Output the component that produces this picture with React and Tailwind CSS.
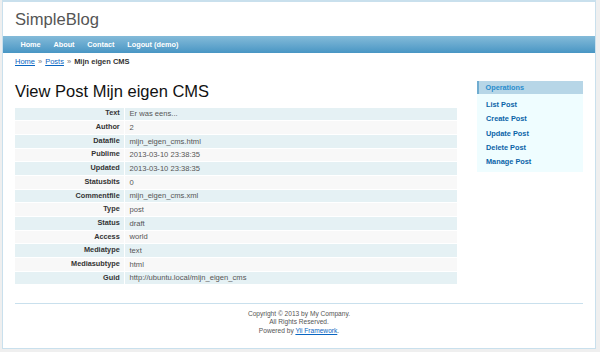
import React from 'react';

const details = [
    ['Text', 'Er was eens...'],
    ['Author', '2'],
    ['Datafile', 'mijn_eigen_cms.html'],
    ['Publime', '2013-03-10 23:38:35'],
    ['Updated', '2013-03-10 23:38:35'],
    ['Statusbits', '0'],
    ['Commentfile', 'mijn_eigen_cms.xml'],
    ['Type', 'post'],
    ['Status', 'draft'],
    ['Access', 'world'],
    ['Mediatype', 'text'],
    ['Mediasubtype', 'html'],
    ['Guid', 'http://ubuntu.local/mijn_eigen_cms'],
];

const menu = ['Home', 'About', 'Contact', 'Logout (demo)'];
const operations = ['List Post', 'Create Post', 'Update Post', 'Delete Post', 'Manage Post'];

const App = () => {
    return (
        <div
            className="w-[600px] h-[352px] bg-[#efefef] pl-[2px] pr-[4px] pb-[3px] overflow-hidden text-[#555]"
            style={{ fontFamily: '"Liberation Sans", Arial, sans-serif' }}
        >
            <div className="h-[349px] bg-white border border-[#c9e0ed] border-t-2 flex flex-col">
                {/* header */}
                <div className="h-[34px] pt-[8px] pl-[12px]">
                    <div className="text-[16.6px] leading-[20px] text-[#555]">SimpleBlog</div>
                </div>

                {/* main menu */}
                <div className="h-[17px] bg-gradient-to-b from-[#84bbd9] to-[#4896c4] flex items-center pl-[11px]">
                    {menu.map(item => (
                        <span key={item} className="px-[6.4px] text-[7.3px] font-bold text-white leading-none">{item}</span>
                    ))}
                </div>

                {/* breadcrumbs */}
                <div className="h-[17.5px] flex items-center pl-[12px] text-[7.5px] leading-none gap-[3px]">
                    <span className="text-[#0a66c2] underline">Home</span>
                    <span className="text-[#777]">»</span>
                    <span className="text-[#0a66c2] underline">Posts</span>
                    <span className="text-[#777]">»</span>
                    <span className="font-bold text-[#333]">Mijn eigen CMS</span>
                </div>

                {/* content */}
                <div className="flex pl-[12px] pt-[10px] h-[232px]">
                    <div className="w-[442px]">
                        <h1 className="text-[16.5px] leading-[20px] text-[#111]">View Post Mijn eigen CMS</h1>
                        <div className="mt-[7px] flex flex-col gap-[1px]">
                            {details.map(([label, value], i) => (
                                <div key={label} className={`flex h-[12.7px] ${i % 2 === 0 ? 'bg-[#e5f1f4]' : 'bg-[#f8f8f8]'}`}>
                                    <div className="w-[109px] text-right pr-[4.3px] text-[7.3px] font-bold text-[#333] flex items-center justify-end">
                                        {label}
                                    </div>
                                    <div className="w-[1px] bg-white" />
                                    <div className="flex-1 pl-[4.5px] text-[7.6px] text-[#555] flex items-center">
                                        {value}
                                    </div>
                                </div>
                            ))}
                        </div>
                    </div>

                    {/* sidebar */}
                    <div className="ml-[20px] w-[106px] pt-[0.4px]">
                        <div className="h-[13.3px] bg-[#b7d6e7] border-l-[2.4px] border-[#6facd0] flex items-center pl-[6.5px]">
                            <span className="text-[7.3px] font-bold text-[#298dcd] leading-none">Operations</span>
                        </div>
                        <div className="bg-[#effdff] pt-[3.5px] pb-[2.5px] pl-[9px]">
                            {operations.map(op => (
                                <div key={op} className="h-[14.3px] flex items-center text-[7.35px] font-bold text-[#0b64a8] leading-none">
                                    {op}
                                </div>
                            ))}
                        </div>
                    </div>
                </div>

                {/* footer */}
                <div className="mx-[12px] border-t border-[#c9e0ed] pt-[6px] text-center text-[6.6px] leading-[8.7px] text-[#555]">
                    <div>Copyright © 2013 by My Company.</div>
                    <div>All Rights Reserved.</div>
                    <div>
                        Powered by <span className="text-[#0a66c2] underline">Yii Framework</span>.
                    </div>
                </div>
            </div>
        </div>
    );
};

export default App;
